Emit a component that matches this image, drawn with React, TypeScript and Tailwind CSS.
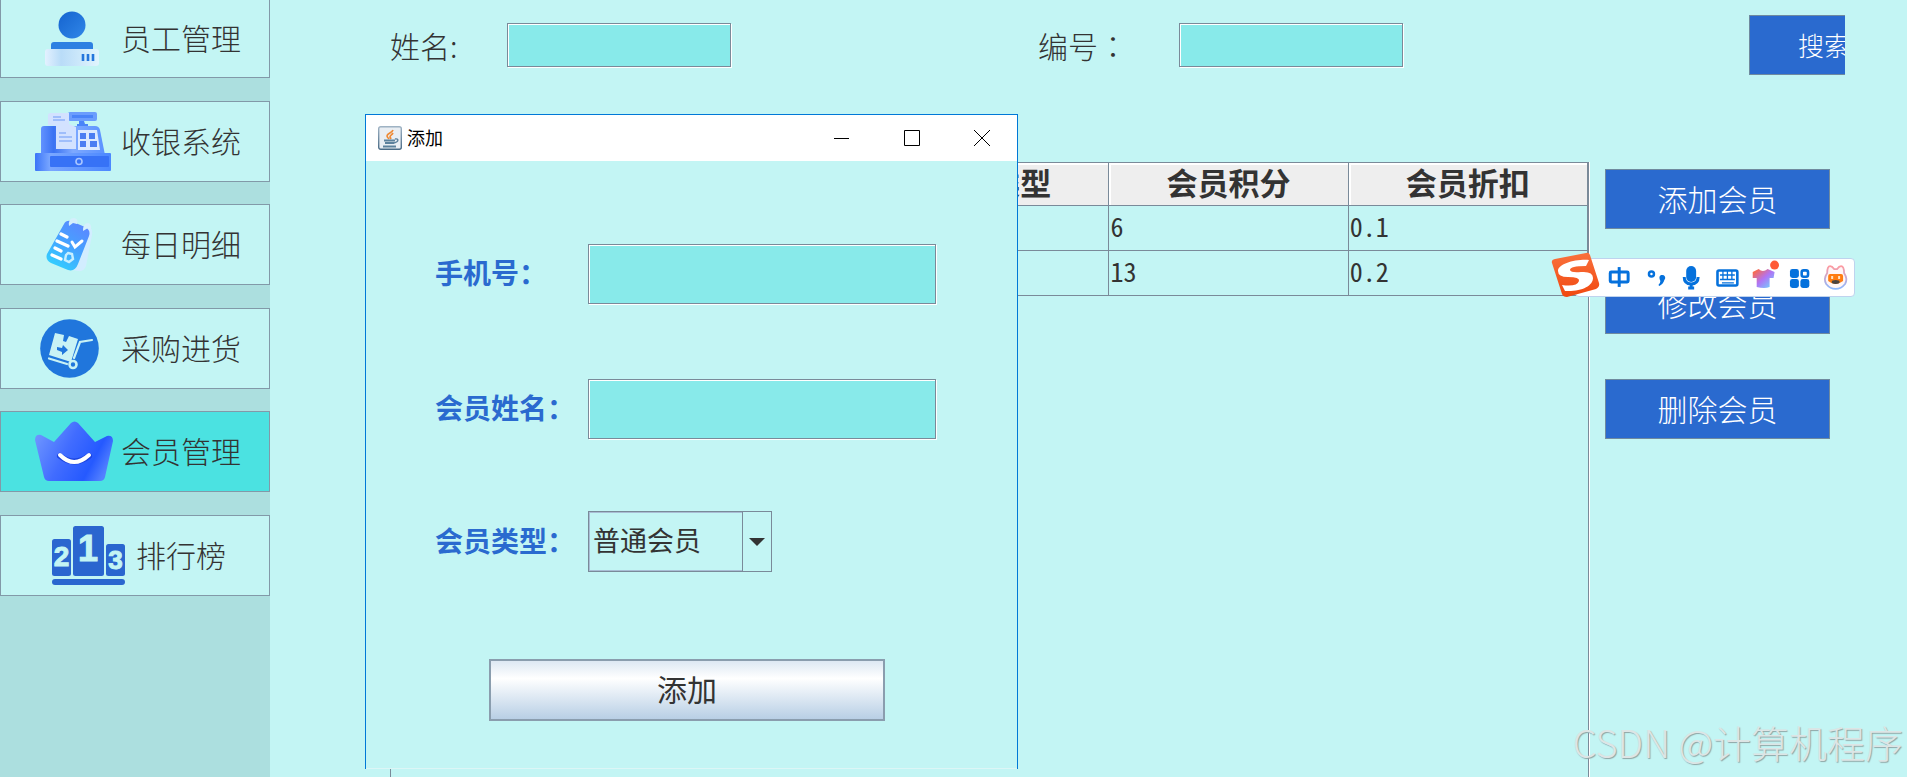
import React from 'react';

const fieldClass =
  'bg-[#88eaea] border border-[#7a8a99] shadow-[1px_1px_0_#fff,inset_1px_1px_0_#fff] px-2 text-[26px] text-[#333] outline-none';

const StaffIcon = () => (
  <svg width="54" height="56" viewBox="0 0 54 56">
    <defs>
      <linearGradient id="staffHead" x1="0" y1="0" x2="1" y2="1">
        <stop offset="0" stopColor="#1463cf" />
        <stop offset="1" stopColor="#3187e8" />
      </linearGradient>
      <linearGradient id="staffBase" x1="0" y1="0" x2="1" y2="0">
        <stop offset="0" stopColor="#e3f1ff" />
        <stop offset="0.3" stopColor="#b9dcf8" />
        <stop offset="1" stopColor="#e0f5fd" />
      </linearGradient>
    </defs>
    <circle cx="27" cy="14" r="13.5" fill="url(#staffHead)" />
    <rect x="6" y="31" width="42" height="12" rx="3" fill="#2d80e2" />
    <rect x="0" y="38" width="54" height="17" rx="3" fill="url(#staffBase)" />
    <path d="M38 43v7M43 43v7M48 43v7" stroke="#2576dc" strokeWidth="2.6" />
  </svg>
);

const RegisterIcon = () => (
  <svg width="76" height="59" viewBox="0 0 76 59">
    <defs>
      <linearGradient id="regBody" x1="0" y1="0" x2="1" y2="0">
        <stop offset="0" stopColor="#6292ff" />
        <stop offset="0.2" stopColor="#3a72f2" />
        <stop offset="0.5" stopColor="#7ea9ff" />
        <stop offset="1" stopColor="#5a92ff" />
      </linearGradient>
      <linearGradient id="regDrawer" x1="0" y1="0" x2="1" y2="0">
        <stop offset="0" stopColor="#3a75f8" />
        <stop offset="0.2" stopColor="#7aa7ff" />
        <stop offset="1" stopColor="#4b88ff" />
      </linearGradient>
    </defs>
    <rect x="33" y="0" width="29" height="9" rx="2" fill="#6b9dfd" />
    <path d="M37 4.500h21" stroke="#4a84f8" strokeWidth="3" />
    <path d="M44 9h5l1 3h3v4H42v-4h2z" fill="#4a84f8" />
    <path d="M6 17q0-3 3-3h51q4 0 5 4l5 25H6z" fill="url(#regBody)" />
    <path d="M13 3q0-2 3-2h18v11l7 3v22H21V14l-8-1z" fill="#d3e2ff" />
    <path d="M18 5h8M18 8h12M24 21h7M24 25h13M24 29h13" stroke="#8fb2fa" strokeWidth="1.6" />
    <path d="M43 18h19l3 20H43z" fill="#dce9ff" />
    <path d="M45 21h6v6h-6zM54 21h6v6h-6zM45 29h6v6h-6zM55 29h7v6h-7z" fill="#4c7df2" />
    <rect x="0" y="41" width="76" height="18" rx="1" fill="url(#regDrawer)" />
    <rect x="15" y="44" width="59" height="11" rx="1" fill="#3772f6" />
    <circle cx="44" cy="49.500" r="3" fill="none" stroke="#a9c6ff" strokeWidth="1.6" />
  </svg>
);

const NotesIcon = () => (
  <svg width="48" height="57" viewBox="0 0 48 57">
    <defs>
      <linearGradient id="notePage" x1="0.8" y1="0" x2="0.2" y2="1">
        <stop offset="0" stopColor="#5c86ff" />
        <stop offset="0.5" stopColor="#45a3ff" />
        <stop offset="1" stopColor="#31d3ff" />
      </linearGradient>
    </defs>
    <path d="M26 8 43 11q4 2 3 8l-6 31q-2 6-8 5l-12-2z" fill="#d2edff" />
    <path d="M18 8q2-4 7-3l14 6q6 3 4 9L32 48q-3 8-10 6L5 47q-6-3-4-9z" fill="url(#notePage)" />
    <path d="M23 10q-1-8 5-8q5 1 3 6l-4-1zM37 15q0-8 5-8q4 1 3 7l-3-2z" fill="#d5effc" />
    <path d="m15 18 6 3M11 25l11 5M9 32l6 3M6 39l9 4" stroke="#fff" strokeWidth="3.200" strokeLinecap="round" />
    <path d="m26 26 3 5 7-6" stroke="#fff" strokeWidth="3" fill="none" strokeLinecap="round" />
    <path d="m22 37 4 1 1 5-4 3-4-2 1-5z" stroke="#c7efff" strokeWidth="2.400" fill="none" />
  </svg>
);

const PurchaseIcon = () => (
  <svg width="59" height="59" viewBox="0 0 59 59">
    <circle cx="29.500" cy="29.500" r="29.300" fill="#2076dc" />
    <path d="m15 14 9 2-1 6 3 1 3-6 9 3-7 23L9 36z" fill="#c9f2f5" />
    <path d="m17 28 5 1 1-3 5 5-6 5v-3l-5-2z" fill="#2076dc" />
    <path d="M9 39.500 27 45M52 21l-12 2-6 16" stroke="#c9f2f5" strokeWidth="2.200" fill="none" strokeLinecap="round" />
    <circle cx="33" cy="45.500" r="3.500" fill="none" stroke="#c9f2f5" strokeWidth="2.600" />
  </svg>
);

const CrownIcon = () => (
  <svg width="78" height="61" viewBox="0 0 78 61">
    <defs>
      <linearGradient id="crown" x1="0" y1="0.2" x2="1" y2="0.6">
        <stop offset="0" stopColor="#7097ff" />
        <stop offset="0.45" stopColor="#416cff" />
        <stop offset="0.8" stopColor="#2559ff" />
        <stop offset="1" stopColor="#5380ff" />
      </linearGradient>
    </defs>
    <path
      d="M36 2q3.500-3 7 0l17 19 12-6q6-1 6 5l-8 36q-1 4-5 4H14q-4 0-5-4L0 19q0-6 6-5l13 7z"
      fill="url(#crown)"
    />
    <path d="M25 35q14 11 29 0" stroke="#1c45e0" strokeWidth="6" fill="none" strokeLinecap="round" />
    <path d="M25 34q14 14 29 0" stroke="#fff" strokeWidth="4" fill="none" strokeLinecap="round" />
  </svg>
);

const RankIcon = () => (
  <svg width="73" height="59" viewBox="0 0 73 59" fontFamily="Liberation Sans, sans-serif" fontWeight="bold" textAnchor="middle">
    <rect x="0" y="13" width="19" height="37" rx="2.500" fill="#2a66cf" />
    <rect x="21" y="0" width="31" height="50" rx="2.500" fill="#2a66cf" />
    <rect x="54" y="18" width="19" height="32" rx="2.500" fill="#2a66cf" />
    <rect x="0" y="53" width="73" height="6" rx="3" fill="#2a66cf" />
    <text x="9.500" y="40" fontSize="28" fill="#c3f5f4" stroke="#c3f5f4">2</text>
    <text x="36" y="35" fontSize="36" fill="#c3f5f4" stroke="#c3f5f4">1</text>
    <text x="63.500" y="43" fontSize="26" fill="#c3f5f4" stroke="#c3f5f4">3</text>
  </svg>
);

const menu = [
  { label: '员工管理', icon: StaffIcon, iconPad: 'pl-[44px]', box: 'w-[120px]' },
  { label: '收银系统', icon: RegisterIcon, iconPad: 'pl-[34px]', box: 'w-[120px]' },
  { label: '每日明细', icon: NotesIcon, iconPad: 'pl-[45px]', box: 'w-[120px]' },
  { label: '采购进货', icon: PurchaseIcon, iconPad: 'pl-[39px]', box: 'w-[120px]' },
  { label: '会员管理', icon: CrownIcon, iconPad: 'pl-[34px]', box: 'w-[120px]', active: true },
  { label: '排行榜', icon: RankIcon, iconPad: 'pl-[51px]', box: 'w-[135px]' },
];

const rows = [
  { points: '6', discount: '0.1' },
  { points: '13', discount: '0.2' },
];

const Sidebar: React.FC = () => (
  <aside className="w-[270px] shrink-0 bg-[#acdfdf]">
    <nav className="flex h-[596px] flex-col justify-between">
      {menu.map((m, idx) => {
        const Icon = m.icon;
        return (
          <button
            key={m.label}
            className={`flex w-full items-center border border-[#8299a8] text-left text-[30px] leading-[36px] font-light text-[#333] ${
              idx === 0 ? 'h-[78px] border-t-0' : 'h-[81px]'
            } ${m.active ? 'bg-[#4be2e1]' : 'bg-[#c3f5f4]'}`}
          >
            <span className={`shrink-0 ${m.box} ${m.iconPad}`}>
              <Icon />
            </span>
            <span className="pb-[3px]">{m.label}</span>
          </button>
        );
      })}
    </nav>
  </aside>
);

const SearchBar: React.FC = () => (
  <div className="flex items-center justify-between pt-[15px] pr-[62px] pl-[120px] text-[30px] leading-[36px] font-light text-[#333]">
    <div className="flex items-center">
      <label htmlFor="name" className="w-[117px]">姓名:</label>
      <input id="name" className={`h-[44px] w-[224px] ${fieldClass}`} />
    </div>
    <div className="flex items-center pr-[39px]">
      <label htmlFor="code" className="w-[141px] font-['Noto_Sans_CJK_TC',sans-serif]">编号：</label>
      <input id="code" className={`h-[44px] w-[224px] ${fieldClass}`} />
    </div>
    <div className="w-[96px] overflow-hidden">
      <button className="h-[60px] w-[150px] border border-[#6f8a9f] bg-[#2a6acf] text-[26px] text-white">搜索</button>
    </div>
  </div>
);

const MemberTable: React.FC = () => (
  <div className="flex-1 border border-b-0 border-[#7a8a99] shadow-[1px_0_0_#fff]">
    <table className="w-full table-fixed border-collapse text-[#333]">
      <thead>
        <tr className="h-[42px] bg-[#eee] text-[31px] leading-[36px]">
          <th className="border-r border-b border-[#7a8a99] p-0" />
          <th className="border-r border-b border-[#7a8a99] p-0" />
          {['会员类型', '会员积分', '会员折扣'].map((h) => (
            <th key={h} className="border-r border-b border-[#7a8a99] px-0 pt-0 pb-1 font-bold shadow-[inset_2px_2px_0_#fff]">
              {h}
            </th>
          ))}
        </tr>
      </thead>
      <tbody>
        {rows.map((r) => (
          <tr key={r.points} className="h-[45px] font-['Noto_Sans_Mono_CJK_SC','Noto_Sans_CJK_SC',sans-serif] text-[26px] leading-[36px]">
            <td className="border-r border-b border-[#7a8a99]" />
            <td className="border-r border-b border-[#7a8a99]" />
            <td className="border-r border-b border-[#7a8a99]" />
            <td className="border-r border-b border-[#7a8a99] px-px pt-0 pb-1">{r.points}</td>
            <td className="border-r border-b border-[#7a8a99] px-px pt-0 pb-1">{r.discount}</td>
          </tr>
        ))}
      </tbody>
    </table>
  </div>
);

const JavaIcon = () => (
  <svg width="24" height="24" viewBox="0 0 24 24" fill="none">
    <defs>
      <linearGradient id="javaEdge" x1="0" y1="0" x2="0" y2="1">
        <stop offset="0" stopColor="#9fb3c4" />
        <stop offset="1" stopColor="#4a6b86" />
      </linearGradient>
    </defs>
    <rect x="0.700" y="0.700" width="22.600" height="22.600" rx="2" fill="#e9eef3" stroke="url(#javaEdge)" strokeWidth="1.400" />
    <path d="M15 4c-1 3-6 3-6 6 0 1 1 2 2 3M15 7c-1 2-3 2-3 4l1 2" stroke="#ef8a35" strokeWidth="1.700" />
    <path d="M6 14.500h11M7 17h9M5 20.500h13" stroke="#5c819c" strokeWidth="1.800" />
    <path d="M17 13c4-1 4 3-1 4" stroke="#5c819c" strokeWidth="1.400" />
  </svg>
);

const AddDialog: React.FC = () => (
  <div role="dialog" aria-label="添加" className="absolute top-[114px] left-[95px] w-[653px] border border-b-0 border-[#0078d7] bg-[#c3f5f4]">
    <div className="flex h-[46px] items-center bg-white pl-3 text-[18px] leading-[24px] text-black">
      <JavaIcon />
      <span className="flex-1 pb-0.5 pl-[5px]">添加</span>
      <button aria-label="最小化" className="flex h-full w-[70px] items-center justify-center">
        <svg width="16" height="16" stroke="#000"><path d="M0 8.500h15" /></svg>
      </button>
      <button aria-label="最大化" className="flex h-full w-[70px] items-center justify-center">
        <svg width="16" height="16" fill="none" stroke="#000"><path d="M.5.500h15v15H.5z" /></svg>
      </button>
      <button aria-label="关闭" className="flex h-full w-[70px] items-center justify-center">
        <svg width="16" height="16" stroke="#000"><path d="m0 0 16 16M16 0 0 16" /></svg>
      </button>
    </div>
    <form className="border-b border-[#dcf6f6] px-[69px] pt-[83px] pb-[47px]">
      <div className="flex items-center">
        <label htmlFor="phone" className="w-[153px] pb-1 text-[28px] font-bold text-[#2a6acf]">手机号：</label>
        <input id="phone" className={`h-[60px] w-[348px] ${fieldClass}`} />
      </div>
      <div className="mt-[75px] flex items-center">
        <label htmlFor="member" className="w-[153px] pb-1 text-[28px] font-bold text-[#2a6acf]">会员姓名：</label>
        <input id="member" className={`h-[60px] w-[348px] ${fieldClass}`} />
      </div>
      <div className="mt-[72px] flex items-center">
        <label htmlFor="type" className="w-[153px] pb-1 text-[28px] font-bold text-[#2a6acf]">会员类型：</label>
        <div className="relative h-[61px] w-[184px] border border-[#7a8a99]">
          <select id="type" className="h-full w-full appearance-none border border-[#a9bdd4] bg-transparent pb-0.5 pl-[3px] text-[27px] text-[#333] outline-none">
            <option>普通会员</option>
          </select>
          <span className="pointer-events-none absolute inset-y-0 right-0 flex w-[29px] items-center justify-center border-l border-[#7a8a99] bg-[#c3f5f4]">
            <svg width="16" height="8" fill="#333"><path d="M0 0h16L8 8z" /></svg>
          </span>
        </div>
      </div>
      <button
        type="button"
        className="mt-[87px] ml-[54px] block h-[62px] w-[396px] border-2 border-[#8a9dae] bg-linear-to-b from-[#dde8f3] via-white via-30% to-[#b8cfe5] pb-1 text-[30px] leading-[36px] text-[#333]"
      >
        添加
      </button>
    </form>
  </div>
);

const ImeBar: React.FC = () => (
  <div className="absolute top-[258px] right-[52px] flex h-[39px] w-[280px] items-center rounded-sm border border-[#bfd3ee] bg-white">
    <svg className="absolute -top-[7px] -left-[25px]" width="50" height="48" viewBox="0 0 50 48">
      <defs>
        <linearGradient id="sogou" x1="0" y1="0" x2="0" y2="1">
          <stop offset="0" stopColor="#f9713d" />
          <stop offset="1" stopColor="#f1480f" />
        </linearGradient>
      </defs>
      <path d="M4 7 35 1q3-1 4 2l9 28q1 4-3 6l-29 8q-4 0-5-3L1 11q-1-3 3-4z" fill="url(#sogou)" />
      <path
        d="M38 8C24 7 7 12 7 19q0 6 10 6q12 0 11 4q-2 6-17 4l3 6C30 40 42 34 42 26q0-7-12-6q-10 1-11-2q0-4 16-4z"
        fill="#fff"
      />
    </svg>
    <svg width="280" height="37" viewBox="0 0 280 37">
      <defs>
        <linearGradient id="shirt" x1="0" y1="0" x2="1" y2="1">
          <stop offset="0.1" stopColor="#fb6a4a" />
          <stop offset="0.5" stopColor="#b074f5" />
          <stop offset="1" stopColor="#66e0ff" />
        </linearGradient>
        <linearGradient id="face" x1="0" y1="0" x2="0" y2="1">
          <stop offset="0" stopColor="#ff9aa0" />
          <stop offset="1" stopColor="#8cb8ff" />
        </linearGradient>
      </defs>
      <g fill="none" stroke="#0571dc" strokeWidth="3">
        <rect x="34.500" y="13" width="18" height="10" rx="1" />
        <path d="M43.500 8v20" />
        <circle cx="76" cy="15" r="2.500" strokeWidth="2.500" />
        <path d="M109 18q0 7 7 7t7-7" />
        <path d="M116 25v5M113 29h6" />
        <rect x="142.500" y="11.500" width="20" height="15" rx="1.500" strokeWidth="2.600" />
        <path d="M145 16h15M145 20.500h15M148 12v9M152.500 12v9M157 12v9M147 24h12" strokeWidth="1.300" />
      </g>
      <path d="M84 18a3 3 0 1 1 5 3q-1 4-5 6l-1-1q2-2 2-4-1-1-1-4z" fill="#0571dc" />
      <rect x="111" y="7" width="10" height="16" rx="5" fill="#0571dc" />
      <path d="m178 13 6-3q4 4 9 0l7 3-1 6h-4v9q-5 2-13 0v-9h-4z" fill="url(#shirt)" />
      <circle cx="200" cy="6" r="4.500" fill="#ff5a36" />
      <g fill="#0571dc">
        <rect x="215.500" y="10" width="9" height="9" rx="2.500" />
        <rect x="215.500" y="20" width="9" height="9" rx="2.500" />
        <rect x="226" y="20" width="9" height="9" rx="2.500" />
      </g>
      <rect x="227.300" y="11.300" width="6.400" height="6.400" rx="2" fill="none" stroke="#0571dc" strokeWidth="2.600" />
      <path
        d="M253 14q0-7 3-7 2 0 4 3h3q2-3 4-3 3 0 3 7 4 6 1 11-4 5-9.500 5T252 25q-3-5 1-11z"
        fill="#fff6f6"
        stroke="url(#face)"
        strokeWidth="1.800"
      />
      <path d="M254 17q0-2 2-2h11q2 0 2 2v5q-8 6-15 0z" fill="#ff7c11" />
      <path d="M258 17v3M265 17v3" stroke="#ffe3c2" strokeWidth="2" />
      <ellipse cx="261.500" cy="23" rx="4" ry="2" fill="#4b4440" />
    </svg>
  </div>
);

const actions = ['添加会员', '修改会员', '删除会员'];

export default function App() {
  return (
    <div className="flex min-h-screen bg-[#c3f5f4] font-['Noto_Sans_CJK_SC',sans-serif]">
      <Sidebar />
      <main className="relative flex min-w-0 flex-1 flex-col overflow-hidden">
        <SearchBar />
        <div className="mt-[87px] flex flex-1 gap-4 pr-[77px] pl-[120px]">
          <MemberTable />
          <div className="flex w-[225px] flex-col gap-[45px] pt-[7px]">
            {actions.map((a) => (
              <button key={a} className="h-[60px] w-full border border-[#6f8a9f] bg-[#2a6acf] pb-0.5 text-[30px] leading-[36px] font-light text-white">
                {a}
              </button>
            ))}
          </div>
        </div>
        <AddDialog />
        <ImeBar />
        <p className="absolute right-1 bottom-[7px] text-[38px] leading-[56px] font-light text-[#dde5e5] [text-shadow:1px_1px_1px_#8fa5a5]">
          CSDN @计算机程序
        </p>
      </main>
    </div>
  );
}
